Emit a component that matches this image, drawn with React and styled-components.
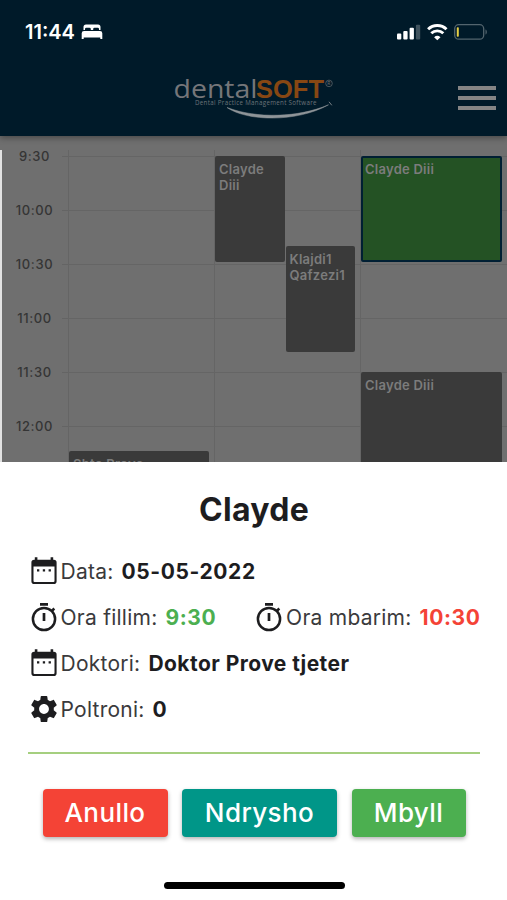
import styled, { createGlobalStyle } from 'styled-components';

const times = ["9:30", "10:00", "10:30", "11:00", "11:30", "12:00"];

const CalendarIcon = () => (
    <Icon viewBox="0 0 28 30">
        <path fill="#1d1d1f" fillRule="evenodd" d="M4.8 1.2h2.6v2.5h13.2V1.2h2.6v2.5h.6A2.8 2.8 0 0 1 26.6 6.5v18.7a2.8 2.8 0 0 1-2.8 2.8H4.2a2.8 2.8 0 0 1-2.8-2.8V6.5a2.8 2.8 0 0 1 2.8-2.8h.6zM3.5 10.5v14.4a1 1 0 0 0 1 1h19a1 1 0 0 0 1-1V10.5z"/>
        <path fill="#1d1d1f" d="M7 13.300h2.300v2.300H7zM12.800 13.300h2.300v2.300h-2.300zM18.600 13.300h2.300v2.300h-2.300z"/>
    </Icon>
);

const TimerIcon = () => (
    <Icon viewBox="0 0 28 30">
        <path d="M10 2.3h8M14 11v8" stroke="#1d1d1f" strokeWidth="2.7"/>
        <circle cx="14" cy="17" r="11.1" fill="none" stroke="#1d1d1f" strokeWidth="2.5"/>
        <path d="M21.8 9l2.5-2.5" stroke="#1d1d1f" strokeWidth="2.5"/>
    </Icon>
);

const GearIcon = () => (
    <Icon viewBox="1.9 1 20.2 22">
        <path fill="#1d1d1f" d="M19.140 12.940c.04-.3.06-.61.06-.94 0-.32-.02-.64-.07-.94l2.030-1.580c.18-.14.23-.41.12-.61l-1.920-3.320c-.12-.22-.37-.29-.59-.22l-2.390.96c-.5-.38-1.030-.7-1.620-.94l-.36-2.540c-.04-.24-.24-.41-.48-.41h-3.840c-.24 0-.43.17-.47.41l-.36 2.540c-.59.24-1.130.57-1.620.94l-2.390-.96c-.22-.08-.47 0-.59.22L2.740 8.870c-.12.21-.08.47.12.61l2.030 1.580c-.05.3-.09.63-.09.94s.02.64.07.94l-2.030 1.580c-.18.14-.23.41-.12.61l1.920 3.320c.12.22.37.29.59.22l2.390-.96c.5.38 1.030.7 1.620.94l.36 2.540c.05.24.24.41.48.41h3.840c.24 0 .44-.17.47-.41l.36-2.540c.59-.24 1.130-.56 1.620-.94l2.390.96c.22.08.47 0 .59-.22l1.920-3.320c.12-.22.07-.47-.12-.61l-2.010-1.580zM12 15.600c-1.980 0-3.600-1.620-3.600-3.600s1.620-3.600 3.600-3.600 3.600 1.620 3.600 3.600-1.620 3.600-3.600 3.600z"/>
    </Icon>
);

const StatusIcons = () => (
    <svg width="92" height="20" viewBox="0 0 92 20">
        <g fill="#fff">
            <rect x="0" y="11.5" width="4.3" height="6" rx="1"/>
            <rect x="6.3" y="9" width="4.3" height="8.5" rx="1"/>
            <rect x="12.6" y="5.7" width="4.3" height="11.8" rx="1"/>
            <rect x="18.9" y="2.7" width="4.3" height="14.8" rx="1" opacity=".25"/>
            <path d="M37.1 15.2a4.7 4.7 0 0 1 6.4 0l-3.2 3z"/>
        </g>
        <g fill="none" stroke="#fff" strokeWidth="2.9">
            <path d="M31.1 7.3a13.1 13.1 0 0 1 18.4 0"/>
            <path d="M34.3 11.3a8.7 8.7 0 0 1 12 0"/>
        </g>
        <rect x="57.7" y="2.7" width="29" height="14.5" rx="4" fill="none" stroke="#53656e" strokeWidth="1.3"/>
        <path d="M88.5 7.5v5c1.8-.6 1.8-4.4 0-5z" fill="#53656e"/>
        <rect x="59.8" y="5.2" width="2" height="9.5" rx=".8" fill="#e6cf45"/>
    </svg>
);

const Logo = () => (
    <LogoSvg width="164" height="46" viewBox="0 0 164 46">
        <text x="2.5" y="22.7" fontSize="26" fontFamily="Open Sans, sans-serif" fill="#757679" textLength="84" lengthAdjust="spacingAndGlyphs">dental</text>
        <text x="85" y="22.7" fontSize="26.5" fontWeight="700" fontFamily="Liberation Sans, sans-serif" fill="#874713" textLength="68" lengthAdjust="spacingAndGlyphs">SOFT</text>
        <text x="24" y="30" fontSize="6.2" fontFamily="Open Sans, sans-serif" fill="#6c7479" textLength="121.5" lengthAdjust="spacing">Dental Practice Management Software</text>
        <circle cx="158" cy="8.4" r="3.3" fill="none" stroke="#656b70" strokeWidth=".7"/>
        <text x="156.3" y="10.3" fontSize="5" fontFamily="Lato, sans-serif" fill="#656b70">R</text>
        <path d="M56 32.5C76 46.5 126 47.5 157.5 29.8C128 42.5 86 44 56 32.5z" fill="#8e9498" stroke="#8e9498" strokeWidth=".5"/>
        <path d="M158 26.8l2.8 3.5" stroke="#858b90" strokeWidth=".9"/>
    </LogoSvg>
);

const App = () => {

    const hours = times.map((time) => {
        return <Hour key={time}>{time}</Hour>
    })

    return (
        <Screen>
            <GlobalStyle/>
            <Header>
                <StatusBar>
                    <Clock>
                        <span>11:44</span>
                        <svg width="22" height="16" viewBox="0 0 22 16">
                            <path fill="#fff" d="M2.5 6V3A2.5 2.5 0 0 1 5 .5h12A2.5 2.5 0 0 1 19.5 3v3H18V5a1.300 1.300 0 0 0-1.300-1.300h-3.200A1.300 1.300 0 0 0 12.200 5v1H9.800V5a1.300 1.300 0 0 0-1.300-1.300H5.300A1.300 1.300 0 0 0 4 5v1zM3 7h16a2.300 2.300 0 0 1 2.300 2.300V15h-2v-1.500H2.700V15h-2V9.300A2.300 2.300 0 0 1 3 7z"/>
                        </svg>
                    </Clock>
                    <StatusIcons/>
                </StatusBar>
                <NavBar>
                    <Logo/>
                    <Menu>
                        <MenuLine/>
                        <MenuLine/>
                        <MenuLine/>
                    </Menu>
                </NavBar>
            </Header>
            <Calendar>
                <Hours>{hours}</Hours>
                <Day>
                    <Lane>
                        <Event $top={295} $height={106}>Shto Prove</Event>
                    </Lane>
                </Day>
                <Day>
                    <Lane>
                        <Event $height={106}>Clayde<br/>Diii</Event>
                    </Lane>
                    <Lane>
                        <Event $top={90} $height={106}>Klajdi1<br/>Qafzezi1</Event>
                    </Lane>
                </Day>
                <Day>
                    <Lane>
                        <Event className="active" $height={106}>Clayde Diii</Event>
                        <Event $top={110} $height={106}>Clayde Diii</Event>
                    </Lane>
                </Day>
            </Calendar>
            <Sheet>
                <Title>Clayde</Title>
                <Details>
                    <Row>
                        <Field><CalendarIcon/><Label>Data:</Label><Value>05-05-2022</Value></Field>
                    </Row>
                    <Row>
                        <Field><TimerIcon/><Label>Ora fillim:</Label><Value $color="#4caf50">9:30</Value></Field>
                        <Field><TimerIcon/><Label>Ora mbarim:</Label><Value $color="#f44336">10:30</Value></Field>
                    </Row>
                    <Row>
                        <Field><CalendarIcon/><Label>Doktori:</Label><Value $spacing="0.45px">Doktor Prove tjeter</Value></Field>
                    </Row>
                    <Row>
                        <Field><GearIcon/><Label>Poltroni:</Label><Value>0</Value></Field>
                    </Row>
                </Details>
                <Actions>
                    <Button $color="#f44336" $width={125}>Anullo</Button>
                    <Button $color="#009688" $width={155}>Ndrysho</Button>
                    <Button $color="#4caf50" $width={114}>Mbyll</Button>
                </Actions>
                <HomeIndicator/>
            </Sheet>
        </Screen>
    );
};

const GlobalStyle = createGlobalStyle`
    * {
        box-sizing: border-box;
    }

    body {
        margin: 0;
        font-family: Inter, "Liberation Sans", sans-serif;
    }
`

const Screen = styled.div`
    display: flex;
    flex-direction: column;
    width: 507px;
    height: 900px;
    overflow: hidden;
    background-color: #6f6f6f;
`

const Header = styled.header`
    flex: none;
    height: 136px;
    background-color: #001a29;
    box-shadow: 0 2px 6px rgba(0, 0, 0, 0.35);
    z-index: 1;
`

const StatusBar = styled.div`
    display: flex;
    justify-content: space-between;
    align-items: center;
    height: 64px;
    padding: 0 18px 0 25px;
`

const Clock = styled.div`
    display: flex;
    align-items: center;
    gap: 6px;
    color: white;
    font-size: 20px;
    font-weight: 600;
`

const NavBar = styled.div`
    display: flex;
    justify-content: space-between;
    padding: 11px 11px 0 171px;
`

const LogoSvg = styled.svg`
    overflow: visible;
`

const Menu = styled.div`
    display: flex;
    flex-direction: column;
    gap: 6px;
    width: 38px;
    padding-top: 11px;
`

const MenuLine = styled.span`
    height: 4px;
    background-color: #858585;
`

const Calendar = styled.main`
    flex: none;
    display: grid;
    grid-template-columns: 68px 146px 146px 147px;
    height: 326px;
    padding-top: 20px;
    overflow: hidden;
    background: linear-gradient(#e2e2e2, #e2e2e2) 0 14px / 2px 312px no-repeat, #6f6f6f;
`

const Hours = styled.div`
    height: 324px;
    background: repeating-linear-gradient(#646464 0 1px, transparent 1px 54px) 62px 0 / 6px 324px no-repeat;
`

const Hour = styled.div`
    height: 54px;
    padding-left: 1px;
    line-height: 0;
    text-align: center;
    font-size: 13px;
    font-weight: 500;
    letter-spacing: 0.6px;
    color: #353535;
`

const Day = styled.div`
    display: flex;
    gap: 1px;
    height: 326px;
    margin-top: -6px;
    padding: 6px 5px 0 0;
    border-left: 1px solid #656565;
    background: repeating-linear-gradient(#656565 0 1px, transparent 1px 54px) 0 6px no-repeat;
`

const Lane = styled.div`
    flex: 1;
`

const Event = styled.div`
    height: ${({$height}) => $height}px;
    margin-top: ${({$top}) => $top || 0}px;
    padding: 5px 4px;
    border-radius: 2px;
    background-color: #3a3a3a;
    color: #7c7c7c;
    font-size: 13px;
    font-weight: 600;
    line-height: 16px;
    letter-spacing: 0.25px;
    white-space: nowrap;

    &.active {
        padding: 3px 2px;
        border: 2px solid #001f33;
        background-color: #245224;
    }
`

const Sheet = styled.section`
    flex: 1;
    display: flex;
    flex-direction: column;
    align-items: center;
    background-color: white;
    color: #1d1d1f;
`

const Title = styled.h1`
    margin: 28px 0 0 1px;
    font-size: 32px;
    line-height: 40px;
    font-weight: 700;
    letter-spacing: 0.3px;
`

const Details = styled.div`
    width: 452px;
    height: 206px;
    margin-top: 18px;
    padding-left: 2px;
    border-bottom: 2px solid #a5cf7f;
`

const Row = styled.div`
    display: flex;
    justify-content: space-between;
    height: 46px;
`

const Field = styled.div`
    display: flex;
    align-items: center;
    font-size: 21px;
    white-space: nowrap;
`

const Icon = styled.svg`
    flex: none;
    width: 28px;
    height: 30px;
    margin-right: 3px;
`

const Label = styled.span`
    margin-right: 8px;
    letter-spacing: 0.25px;
    color: #3a3a3c;
`

const Value = styled.span`
    margin-right: -1px;
    font-weight: 700;
    color: ${({$color}) => $color || "#1d1d1f"};
    letter-spacing: ${({$spacing}) => $spacing || "0.6px"};
`

const Actions = styled.div`
    display: flex;
    gap: 14.5px;
    margin: 34.5px 0 0 1px;
`

const Button = styled.button`
    width: ${({$width}) => $width}px;
    height: 48.5px;
    padding: 0;
    border: 0;
    border-radius: 4px;
    background-color: ${({$color}) => $color};
    box-shadow: 0 2px 4px rgba(0, 0, 0, 0.3);
    color: white;
    font-family: inherit;
    font-size: 26px;
    font-weight: 500;
    letter-spacing: 0.4px;
    cursor: pointer;
`

const HomeIndicator = styled.div`
    width: 181px;
    height: 7px;
    margin: 45px 0 0 1px;
    border-radius: 4px;
    background-color: black;
`

export default App;
